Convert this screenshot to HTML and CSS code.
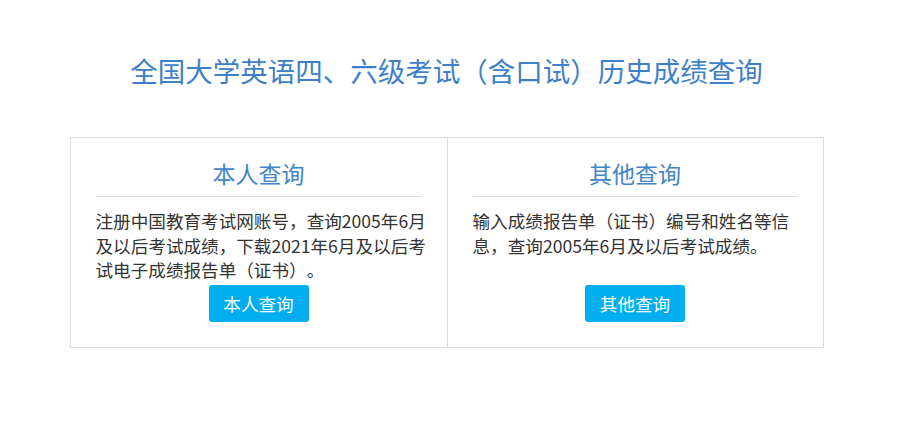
FILE: index.html
```html
<!DOCTYPE html>
<html lang="zh-CN">
<head>
    <meta charset="UTF-8">
    <meta name="viewport" content="width=device-width, initial-scale=1.0">
    <title>全国大学英语四、六级考试（含口试）历史成绩查询</title>
    <link rel="stylesheet" href="styles.css">
</head>
<body>
  <div class="page">
    <h1 class="page-title">全国大学英语四、六级考试（含口试）历史成绩查询</h1>

    <div class="query-panel">
        <div class="query-col">
            <h2>本人查询</h2>
            <p>注册中国教育考试网账号，查询2005年6月及以后考试成绩，下载2021年6月及以后考试电子成绩报告单（证书）。</p>
            <a class="query-btn" href="#">本人查询</a>
        </div>
        <div class="query-col">
            <h2>其他查询</h2>
            <p>输入成绩报告单（证书）编号和姓名等信息，查询2005年6月及以后考试成绩。</p>
            <a class="query-btn" href="#">其他查询</a>
        </div>
    </div>
  </div>
</body>
</html>
```

FILE: styles.css
```css
body {
  margin: 0;
  font-family: "Noto Sans CJK SC", "Noto Sans", sans-serif;
  color: #333;
  background-color: #fff;
  text-spacing-trim: space-all;
}
.page {
  width: 893px;
}
.page-title {
  margin: 50px 0 47px;
  font-size: 27.5px;
  line-height: 40px;
  font-weight: normal;
  color: #3d7fc8;
  text-align: center;
}
.query-panel {
  display: grid;
  grid-template-columns: 377px 1fr;
  width: 752px;
  margin: 0 auto;
  border: 1px solid #ddd;
}
.query-col {
  padding: 17px 25px 25px;
}
.query-col:first-child {
  border-right: 1px solid #ddd;
}
.query-col h2 {
  margin: 0;
  padding-bottom: 5px;
  border-bottom: 1px solid #ddd;
  font-size: 23px;
  line-height: 36px;
  font-weight: normal;
  color: #4284c8;
  text-align: center;
}
.query-col p {
  margin: 12px -8px 0 0;
  min-height: 73.5px;
  font-size: 17.6px;
  line-height: 24.5px;
}
.query-btn {
  display: block;
  width: 100px;
  height: 37px;
  margin: 2.5px auto 0;
  border-radius: 3px;
  background-color: #00aeef;
  color: #fff;
  font-size: 17.6px;
  line-height: 37px;
  text-align: center;
  text-decoration: none;
}
```
